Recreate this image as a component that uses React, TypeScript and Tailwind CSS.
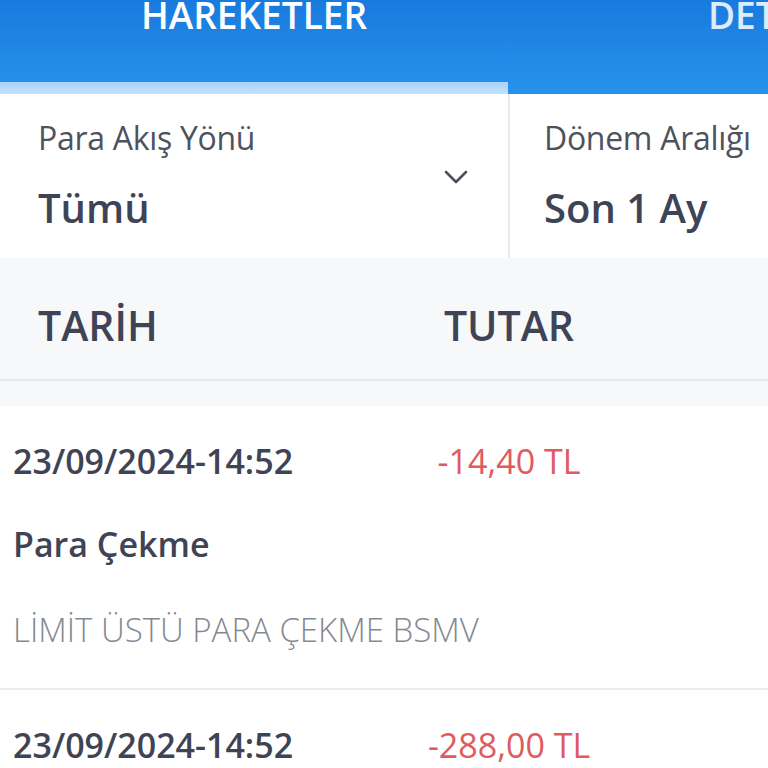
import React from 'react';

const font = { fontFamily: '"Open Sans", "Noto Sans", sans-serif' };

interface Movement {
  date: string;
  amount: string;
  title: string;
  desc: string;
}

const MOVEMENTS: Movement[] = [
  { date: '23/09/2024-14:52', amount: '-14,40 TL', title: 'Para Çekme', desc: 'LİMİT ÜSTÜ PARA ÇEKME BSMV' },
  { date: '23/09/2024-14:52', amount: '-288,00 TL', title: 'Para Çekme', desc: 'LİMİT ÜSTÜ PARA ÇEKME' },
];

function Chevron() {
  return (
    <svg width="24" height="16" viewBox="0 0 24 16" fill="none">
      <polyline points="2,3 12,13 22,3" stroke="#4b505c" strokeWidth="2.6" strokeLinecap="round" strokeLinejoin="round" />
    </svg>
  );
}

function MovementRow({ m }: { m: Movement }) {
  return (
    <div className="border-b-2 border-[#ebecef] pt-[38px] pb-[42px]">
      <div className="flex">
        <div className="w-[250px] pl-[13px] text-[34px] leading-[34px] font-semibold text-[#3e4455] whitespace-nowrap">
          {m.date}
        </div>
        <div className="flex-1 text-center text-[34px] leading-[34px] text-[#e05a5e] whitespace-nowrap">
          {m.amount}
        </div>
      </div>
      <div className="mt-[49px] pl-[13px] text-[34px] leading-[34px] font-semibold text-[#3e4455]">
        {m.title}
      </div>
      <div className="mt-[53px] pl-[13px] text-[33px] leading-[32px] font-light text-[#858991] whitespace-nowrap">
        {m.desc}
      </div>
    </div>
  );
}

export default function App() {
  return (
    <div className="w-[768px] h-[768px] overflow-hidden bg-white" style={font}>
      {/* tabs */}
      <div className="h-[94px] flex bg-gradient-to-b from-[#197ade] to-[#2793ec] overflow-hidden">
        <div className="w-[508px] shrink-0 flex flex-col justify-between">
          <div className="-mt-[4px] text-center text-[37px] leading-[37px] font-semibold text-white">
            HAREKETLER
          </div>
          <div className="h-[12px] bg-gradient-to-b from-[#a9d3f8] to-[#c3e2fb]" />
        </div>
        <div className="flex-1 pl-[200px] -mt-[4px] text-[37px] leading-[37px] font-semibold text-white/85 whitespace-nowrap">
          DETAYLAR
        </div>
      </div>

      {/* filters */}
      <div className="h-[164px] flex bg-white">
        <div className="w-[510px] shrink-0 flex items-start justify-between border-r-2 border-[#eaebee] pl-[38px] pr-[40px] pt-[28px]">
          <div>
            <div className="text-[32px] leading-[32px] text-[#4e525d] tracking-[-0.3px] whitespace-nowrap">Para Akış Yönü</div>
            <div className="mt-[34px] text-[40px] leading-[40px] font-semibold text-[#3e4455]">Tümü</div>
          </div>
          <div className="mt-[47px]">
            <Chevron />
          </div>
        </div>
        <div className="flex-1 pl-[34px] pt-[28px] whitespace-nowrap overflow-hidden">
          <div className="text-[32px] leading-[32px] text-[#4e525d] tracking-[-0.3px]">Dönem Aralığı</div>
          <div className="mt-[34px] text-[40px] leading-[40px] font-semibold text-[#3e4455]">Son 1 Ay</div>
        </div>
      </div>

      {/* table header */}
      <div className="bg-[#f7f8fa]">
        <div className="h-[123px] flex pt-[47px] border-b-2 border-[#e6e8eb]">
          <div className="w-[250px] pl-[38px] text-[41px] leading-[41px] font-semibold text-[#3e4455]">TARİH</div>
          <div className="flex-1 text-center text-[41px] leading-[41px] font-semibold text-[#3e4455]">TUTAR</div>
        </div>
        <div className="h-[25px]" />
      </div>

      {/* list */}
      <div className="bg-white">
        {MOVEMENTS.map((m, i) => (
          <MovementRow key={i} m={m} />
        ))}
      </div>
    </div>
  );
}
